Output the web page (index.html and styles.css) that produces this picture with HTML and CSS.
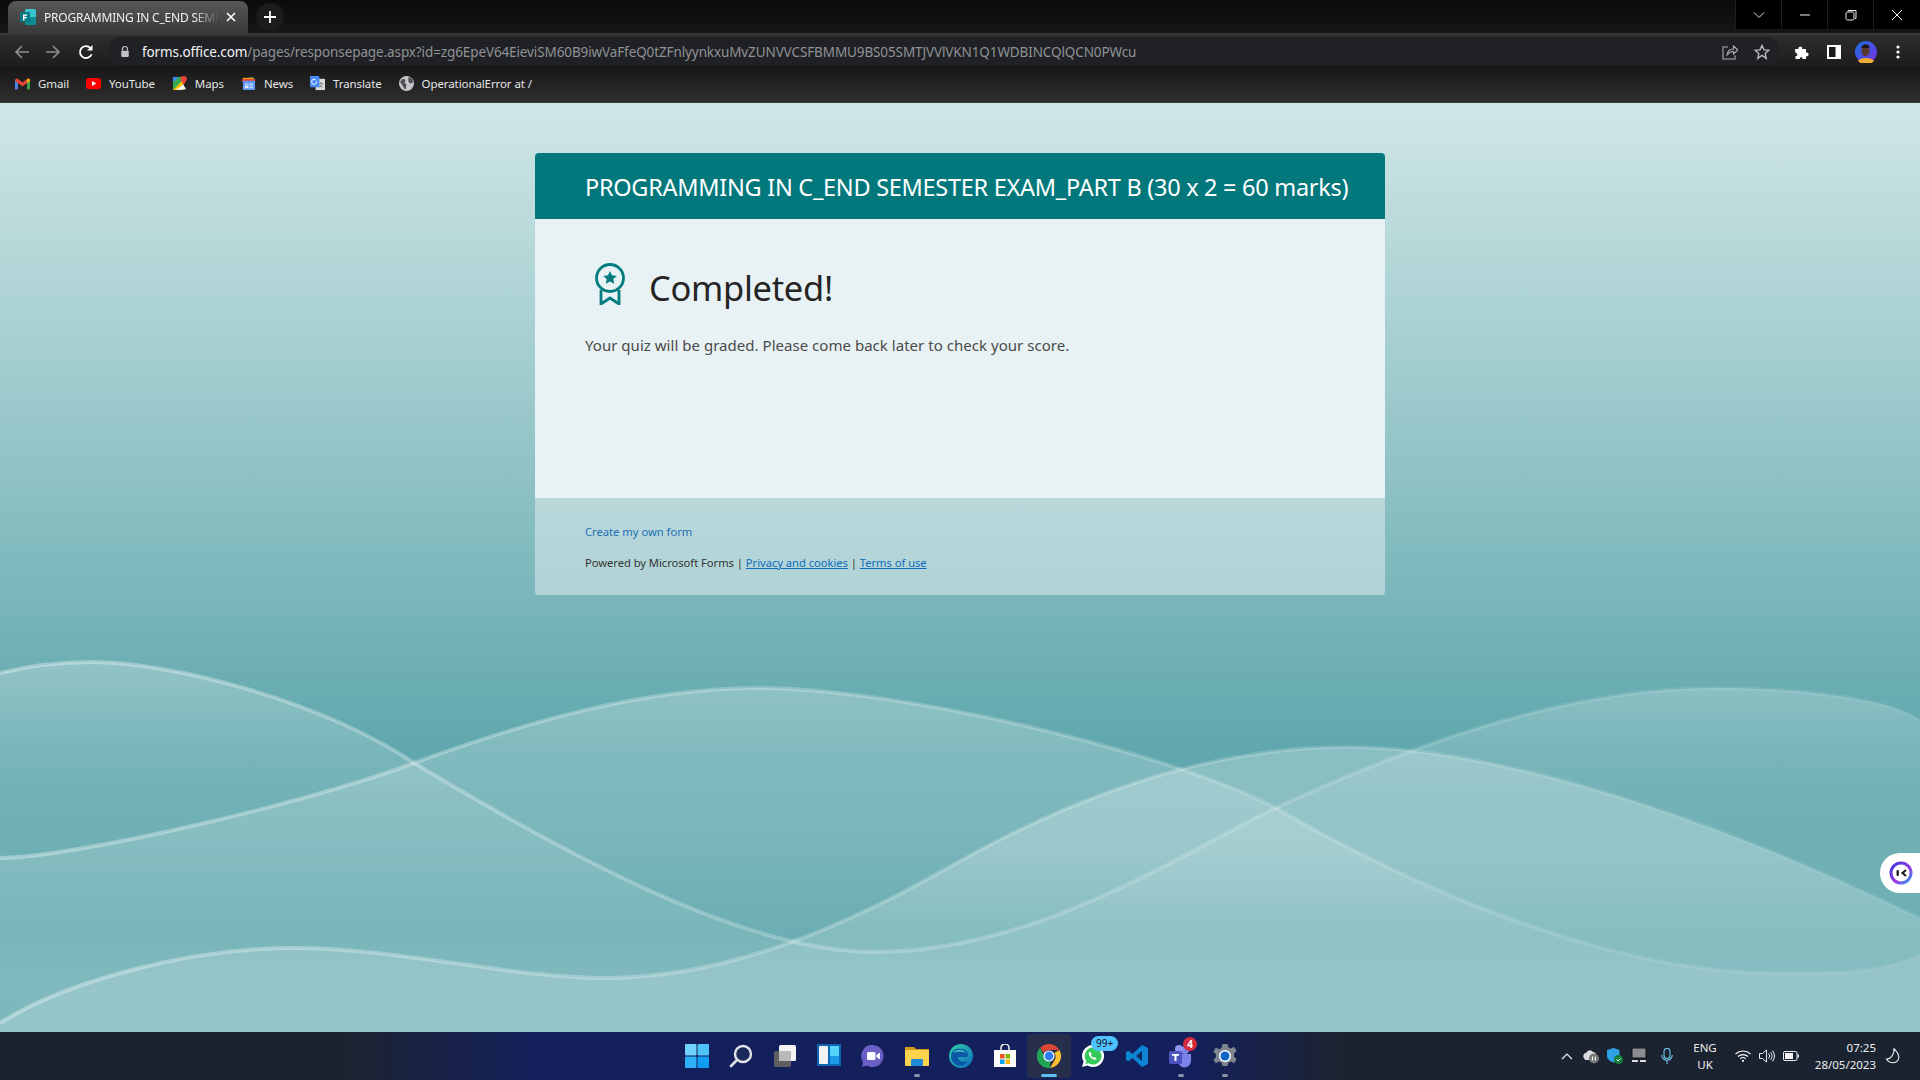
FILE: index.html
```html
<!DOCTYPE html>
<html lang="en">
<head>
<meta charset="utf-8">
<title>PROGRAMMING IN C_END SEMESTER EXAM_PART B</title>
<link rel="stylesheet" href="styles.css">
</head>
<body>
<header class="chrome">
  <div class="tabstrip">
    <div class="tab">
      <svg class="fav" viewBox="0 0 16 16"><rect x="5" y="0" width="11" height="16" rx="1.5" fill="#37c6d0"/><rect x="5" y="8" width="11" height="8" fill="#0f8a92"/><rect x="0" y="3" width="10" height="10" rx="1" fill="#057a80"/><path d="M3 5.5h4.2v1.3H4.5v1.3h2.3v1.2H4.5v2.2H3z" fill="#fff"/></svg>
      <span class="tab-title">PROGRAMMING IN C_END SEMESTER EXAM_PART B</span>
      <svg class="tab-x" viewBox="0 0 10 10"><path d="M1 1l8 8M9 1l-8 8" stroke="#fff" stroke-width="1.6"/></svg>
    </div>
    <div class="newtab"><svg viewBox="0 0 12 12"><path d="M6 0v12M0 6h12" stroke="#fff" stroke-width="1.8"/></svg></div>
    <div class="winctl">
      <div class="winbtn"><svg viewBox="0 0 12 8" width="12" height="8"><path d="M1 1.5l5 5 5-5" fill="none" stroke="#ddd" stroke-width="1"/></svg></div>
      <div class="winbtn"><svg viewBox="0 0 12 2" width="12" height="2"><path d="M1 1h10" stroke="#eee" stroke-width="1"/></svg></div>
      <div class="winbtn"><svg viewBox="0 0 12 12" width="12" height="12"><path d="M3 2.5V1.5h8v8h-1" fill="none" stroke="#eee"/><rect x="1" y="3" width="8" height="8" rx="1.5" fill="none" stroke="#eee"/></svg></div>
      <div class="winbtn"><svg viewBox="0 0 12 12" width="12" height="12"><path d="M1 1l10 10M11 1L1 11" stroke="#eee" stroke-width="1"/></svg></div>
    </div>
  </div>
  <div class="toolbar">
    <svg class="tb-ico back" viewBox="0 0 16 16"><path d="M15 8H2M8 2L2 8l6 6" fill="none" stroke="#8b8c8e" stroke-width="1.7"/></svg>
    <svg class="tb-ico fwd" viewBox="0 0 16 16"><path d="M1 8h13M8 2l6 6-6 6" fill="none" stroke="#8b8c8e" stroke-width="1.7"/></svg>
    <svg class="tb-ico reload" viewBox="0 0 16 16"><path d="M13.6 10.2A6 6 0 1 1 12.4 4" fill="none" stroke="#fff" stroke-width="1.8"/><path d="M14.5 1v5.5H9z" fill="#fff"/></svg>
    <div class="omnibox">
      <svg class="lock" viewBox="0 0 12 14"><path d="M3 6V4a3 3 0 0 1 6 0v2" fill="none" stroke="#c0c1c3" stroke-width="1.4"/><rect x="1.5" y="6" width="9" height="7.5" rx="1" fill="#c0c1c3"/></svg>
      <span class="url"><b class="host">forms.office.com</b>/pages/responsepage.aspx?id=zg6EpeV64EieviSM60B9iwVaFfeQ0tZFnlyynkxuMvZUNVVCSFBMMU9BS05SMTJVVlVKN1Q1WDBINCQlQCN0PWcu</span>
      <svg class="omni-ico" viewBox="0 0 16 16"><path d="M6 3H1v12h12v-3.5" fill="none" stroke="#aeb0b3" stroke-width="1.1"/><path d="M5 11c.5-4 3-6 6.5-6V2L16 6l-4.500 4V7.500C9 7.500 7 8.500 5 11z" fill="none" stroke="#aeb0b3" stroke-width="1.1"/></svg>
      <svg class="omni-ico star" viewBox="0 0 16 16"><path d="M8 1.500l2 4.400 4.800.5-3.600 3.200 1 4.700L8 11.400l-4.200 2.900 1-4.700L1.200 6.400 6 5.900z" fill="none" stroke="#b8babd" stroke-width="1.400"/></svg>
    </div>
    <svg class="tb-right puzzle" viewBox="0 0 16 16"><path d="M1 5h3.500c-.8-3.500 4.500-3.500 3.700 0H12v3.500c3.500-.8 3.500 4.500 0 3.700V15H8.500c.7-2.500-3-2.500-2.500 0H1.500v-3c2.500.7 2.500-3.500 0-3z" fill="#fff"/></svg>
    <svg class="tb-right panel" viewBox="0 0 14 14"><rect width="14" height="14" fill="#fff"/><rect x="2" y="2" width="6.500" height="10" fill="#1a1a1a"/></svg>
    <svg class="avatar" viewBox="0 0 22 22"><defs><linearGradient id="av" x1="0" y1="0" x2="1" y2="1"><stop offset="0" stop-color="#1670e0"/><stop offset="1" stop-color="#7a30e0"/></linearGradient></defs><circle cx="11" cy="11" r="11" fill="url(#av)"/><path d="M3 20c2-4 14-4 16 0a11 11 0 0 1-16 0z" fill="#f2ae35"/><ellipse cx="10.500" cy="9.500" rx="4" ry="5.500" fill="#5a3a30"/><path d="M6.500 7c0-5 8-5 8 0z" fill="#1d1515"/></svg>
    <svg class="kebab" viewBox="0 0 4 14"><circle cx="2" cy="2" r="1.600" fill="#fff"/><circle cx="2" cy="7" r="1.600" fill="#fff"/><circle cx="2" cy="12" r="1.600" fill="#fff"/></svg>
  </div>
  <nav class="bookmarks">
    <a class="bm"><svg viewBox="0 0 16 12"><path d="M0 12V2l2-1.500L8 5l6-4.500L16 2v10h-3V5.500L8 9 3 5.500V12z" fill="#ea4335"/><path d="M0 2v10h3V5.500L0 3z" fill="#4285f4"/><path d="M13 5.500V12h3V3z" fill="#34a853"/><path d="M14 .5L16 2v1l-3 2.500V2z" fill="#fbbc04"/></svg>Gmail</a>
    <a class="bm"><svg viewBox="0 0 16 12"><rect width="16" height="12" rx="3" fill="#f00"/><path d="M6.300 3.300L11 6l-4.700 2.700z" fill="#fff"/></svg>YouTube</a>
    <a class="bm"><svg viewBox="0 0 16 16"><path d="M1 1h11v14H1z" fill="#34a853"/><path d="M1 15L12 4v11z" fill="#fbbc04"/><path d="M1 1h6L1 7z" fill="#4285f4"/><path d="M12.500 0a3.300 3.300 0 0 1 3.300 3.300c0 2.200-3.300 5.700-3.300 5.700S9.200 5.500 9.200 3.300A3.300 3.300 0 0 1 12.500 0z" fill="#ea4335"/><path d="M4 15l11-1-3-5-8 6z" fill="#f5f5f5"/></svg>Maps</a>
    <a class="bm"><svg viewBox="0 0 16 16"><path d="M2 3l11-2 1 3z" fill="#34a853"/><path d="M2 2h11v3H2z" fill="#fbbc04"/><path d="M1 3h14v3H1z" fill="#ea4335"/><rect x="2" y="5" width="13" height="10" rx="1" fill="#5a95f5"/><path d="M4 8h4v1H4zm5 0h4v1H9zm-5 2h4v3H4zm5 0h4v1H9zm0 2h4v1H9z" fill="#e3edff"/></svg>News</a>
    <a class="bm"><svg viewBox="0 0 16 16"><rect x="6" y="3" width="10" height="12" fill="#d9dbde"/><path d="M9 8h5M11.500 6.500v1.500M13 8c-.5 2-2 3.500-3.500 4M10 9.500c.8 1.200 2 2 3.500 2.500" stroke="#777" stroke-width=".9" fill="none"/><rect width="10" height="12" rx="1" fill="#4a8af4"/><path d="M6.800 5.500v.7C6.800 8 5.700 9 4.400 9a2.700 2.700 0 0 1 0-5.500c.8 0 1.400.3 1.800.7" fill="none" stroke="#fff" stroke-width="1"/></svg>Translate</a>
    <a class="bm"><svg viewBox="0 0 16 16"><circle cx="8" cy="8" r="8" fill="#c4c6c9"/><path d="M1 6l3-3 3 1-1 3 2 2-1 5h-1L3 9zM10 1l4 2 1 4-3 1-2-2z" fill="#4f5154"/></svg>OperationalError at /</a>
  </nav>
</header>

<main class="page">
  <svg class="waves" viewBox="0 103 1920 929" preserveAspectRatio="none" aria-hidden="true">
    <defs>
      <linearGradient id="fade" gradientUnits="userSpaceOnUse" x1="0" y1="0" x2="1920" y2="0"><stop offset="0" stop-color="#fff" stop-opacity=".34"/><stop offset=".55" stop-color="#fff" stop-opacity=".2"/><stop offset="1" stop-color="#fff" stop-opacity=".06"/></linearGradient>
      <linearGradient id="g1" gradientUnits="userSpaceOnUse" x1="0" y1="662" x2="0" y2="1032"><stop offset="0" stop-color="#fff" stop-opacity=".25"/><stop offset=".39" stop-color="#fff" stop-opacity=".1"/><stop offset="1" stop-color="#fff" stop-opacity=".08"/></linearGradient>
      <linearGradient id="g2" gradientUnits="userSpaceOnUse" x1="0" y1="688" x2="0" y2="1032"><stop offset="0" stop-color="#fff" stop-opacity=".25"/><stop offset=".44" stop-color="#fff" stop-opacity=".16"/><stop offset=".71" stop-color="#fff" stop-opacity=".07"/><stop offset=".85" stop-color="#fff" stop-opacity=".13"/><stop offset="1" stop-color="#fff" stop-opacity=".1"/></linearGradient>
      <linearGradient id="g3" gradientUnits="userSpaceOnUse" x1="0" y1="747" x2="0" y2="1032"><stop offset="0" stop-color="#fff" stop-opacity=".26"/><stop offset=".39" stop-color="#fff" stop-opacity=".25"/><stop offset=".71" stop-color="#fff" stop-opacity=".16"/><stop offset="1" stop-color="#fff" stop-opacity=".2"/></linearGradient>
    </defs>
    <path fill="url(#g1)" d="M0 673C28 666 60 662 92 662C170 662 320 700 414 763C560 850 740 952 875 952C1040 952 1190 848 1276 808C1400 750 1560 688 1714 688C1780 688 1885 695 1920 720V1032H0Z"/>
    <path fill="url(#g2)" d="M0 858C70 858 300 805 414 763C520 724 640 688 759 688C900 688 1170 752 1276 808C1400 880 1600 973 1775 973C1825 973 1880 975 1920 955V1032H0Z"/>
    <path fill="url(#g3)" d="M0 1023C60 985 180 948 294 948C400 948 510 978 606 978C770 978 920 882 980 850C1070 802 1200 747 1347 747C1500 747 1720 820 1920 918V1032H0Z"/>
    <path class="wave-line" d="M0 673C28 666 60 662 92 662C170 662 320 700 414 763C560 850 740 952 875 952C1040 952 1190 848 1276 808C1400 750 1560 688 1714 688C1780 688 1885 695 1920 720"/>
    <path class="wave-line" d="M0 858C70 858 300 805 414 763C520 724 640 688 759 688C900 688 1170 752 1276 808C1400 880 1600 973 1775 973C1825 973 1880 975 1920 955"/>
    <path class="wave-line" d="M0 1023C60 985 180 948 294 948C400 948 510 978 606 978C770 978 920 882 980 850C1070 802 1200 747 1347 747C1500 747 1720 820 1920 918"/>
  </svg>

  <section class="card">
    <h1 class="card-head">PROGRAMMING IN C_END SEMESTER EXAM_PART B (30 x 2 = 60 marks)</h1>
    <div class="card-body">
      <div class="done-row">
        <svg class="ribbon" viewBox="0 0 30 42"><circle cx="15" cy="15" r="13.500" fill="none" stroke="#037c80" stroke-width="2.800"/><path d="M15 8l2 4.300 4.700.6-3.400 3.200.9 4.700L15 18.500l-4.200 2.300.9-4.700-3.400-3.200 4.700-.6z" fill="#037c80"/><path d="M6 27v14l9-6 9 6V27" fill="none" stroke="#037c80" stroke-width="2.800"/></svg>
        <h2 class="done">Completed!</h2>
      </div>
      <p class="note">Your quiz will be graded. Please come back later to check your score.</p>
    </div>
    <footer class="card-foot">
      <a class="create">Create my own form</a>
      <p class="powered">Powered by Microsoft Forms | <a class="ulink">Privacy and cookies</a> | <a class="ulink">Terms of use</a></p>
    </footer>
  </section>

  <aside class="widget">
    <svg viewBox="0 0 24 24" width="24" height="24"><defs><linearGradient id="wg" x1="0" y1="0" x2="1" y2="1"><stop offset="0" stop-color="#3a3ae0"/><stop offset=".6" stop-color="#9a3ae0"/><stop offset="1" stop-color="#2aa8f0"/></linearGradient></defs><circle cx="12" cy="12" r="10" fill="#fff" stroke="url(#wg)" stroke-width="3"/><rect x="7.500" y="9" width="2.400" height="6" rx="1" fill="#222"/><path d="M17 9l-3.500 3 3.500 3" fill="none" stroke="#222" stroke-width="2.200"/></svg>
  </aside>
</main>

<footer class="taskbar">
  <div class="task-spacer"></div>
  <div class="task-apps">
    <div class="app"><svg viewBox="0 0 24 24"><rect x="0" y="0" width="11.500" height="11.500" rx="1" fill="#6fd3fb"/><rect x="12.500" y="0" width="11.500" height="11.500" rx="1" fill="#4cc3f8"/><rect x="0" y="12.500" width="11.500" height="11.500" rx="1" fill="#2fb0f5"/><rect x="12.500" y="12.500" width="11.500" height="11.500" rx="1" fill="#109cf0"/></svg></div>
    <div class="app"><svg viewBox="0 0 24 24"><circle cx="14" cy="10" r="8" fill="#1b2a5a" stroke="#e2e4ea" stroke-width="2.400"/><path d="M8 16l-6 6" stroke="#e2e4ea" stroke-width="2.600" stroke-linecap="round"/></svg></div>
    <div class="app"><svg viewBox="0 0 24 24"><rect x="6" y="1" width="17" height="16" rx="1.500" fill="#f4f4f4"/><rect x="1" y="7" width="17" height="16" rx="1.500" fill="#5f5f5f"/><rect x="6" y="7" width="12" height="10" fill="#b9b9b9"/></svg></div>
    <div class="app"><svg viewBox="0 0 24 24"><rect width="24" height="22" fill="#0f64b4"/><rect x="2" y="2" width="9" height="18" rx="1" fill="#f2f2f2"/><rect x="13" y="2" width="9" height="10" fill="#55d3fb"/><rect x="13" y="12" width="9" height="8" fill="#1a9bea"/></svg></div>
    <div class="app"><svg viewBox="0 0 24 24"><path d="M12 1a11 11 0 1 1-6 20.500L1 23l1-5A11 11 0 0 1 12 1z" fill="#6a5fc4"/><rect x="6" y="8" width="8.500" height="8" rx="1.500" fill="#fff"/><path d="M15.500 11l3.500-2.500v7L15.500 13z" fill="#fff"/></svg></div>
    <div class="app dot"><svg viewBox="0 0 24 24"><path d="M0 3h9l2 2h13v6H0z" fill="#d39a18"/><rect y="6" width="24" height="16" rx="1" fill="#fcd34d"/><rect x="6" y="15" width="12" height="7" rx="1" fill="#1f8ad8"/></svg></div>
    <div class="app"><svg viewBox="0 0 24 24"><defs><linearGradient id="ed" x1="0" y1="0" x2="1" y2="1"><stop offset="0" stop-color="#2ed0a0"/><stop offset="1" stop-color="#0c6bc4"/></linearGradient></defs><circle cx="12" cy="12" r="12" fill="url(#ed)"/><path d="M2 12C3 5 9 4 13 5c5 1 8 5 5 8H9c0 4 5 6 10 4-3 5-9 6-13 3-3-2-4-5-4-8z" fill="#0b58a8"/><path d="M4 9c3-4 10-4 13 0-4-2-9-2-13 0z" fill="#55e0b0"/></svg></div>
    <div class="app"><svg viewBox="0 0 24 24"><path d="M8 7V4a4 4 0 0 1 8 0v3" fill="none" stroke="#e8e8e8" stroke-width="1.600"/><path d="M1 6h22v17H1z" fill="#fafafa"/><rect x="7" y="10" width="4.500" height="4.500" fill="#f25022"/><rect x="12.500" y="10" width="4.500" height="4.500" fill="#7fba00"/><rect x="7" y="15.500" width="4.500" height="4.500" fill="#00a4ef"/><rect x="12.500" y="15.500" width="4.500" height="4.500" fill="#ffb900"/></svg></div>
    <div class="app active"><svg viewBox="0 0 24 24"><path d="M12 0a12 12 0 0 1 10.400 6H12a6 6 0 0 0-5.200 3L3.200 3.800A12 12 0 0 1 12 0z" fill="#db4437"/><path d="M22.400 6A12 12 0 0 1 13 24l5.200-9A6 6 0 0 0 17.200 9z" fill="#fbc02d"/><path d="M3.200 3.800L8.400 15a6 6 0 0 0 5 2.800L13 24A12 12 0 0 1 3.200 3.800z" fill="#23a455"/><circle cx="12" cy="12" r="5.600" fill="#fff"/><circle cx="12" cy="12" r="4.400" fill="#2f7cf0"/></svg></div>
    <div class="app"><svg viewBox="0 0 24 24"><path d="M12 1a11 11 0 1 1-5.500 20.500L1 23l1.600-5.400A11 11 0 0 1 12 1z" fill="#fff"/><path d="M12 3.500a8.500 8.500 0 1 1-4.500 15.700l-3 .9.900-3A8.500 8.500 0 0 1 12 3.500z" fill="#35c95a"/><path d="M8.500 7.500c-1.500 1.500-.8 4 1.200 6s4.500 3 6 1.500l-2-2-1.200.8c-1-.5-2-1.500-2.500-2.500l.8-1.200z" fill="#fff"/></svg><span class="badge-wa">99+</span></div>
    <div class="app"><svg viewBox="0 0 24 24"><path d="M17 1l6 3v16l-6 3L7.500 14l-4 3.200L1 16V8l2.500-1.200 4 3.200z" fill="#0e84d4"/><path d="M17 7l-6 5 6 5z" fill="#0b2a5e"/></svg></div>
    <div class="app dot"><svg viewBox="0 0 24 24"><circle cx="16" cy="6" r="4" fill="#7b83eb"/><path d="M9 10h13v7a6.500 6.500 0 0 1-13 0z" fill="#7b83eb"/><circle cx="10" cy="5" r="4" fill="#8f96ef"/><rect x="0" y="7" width="13" height="13" rx="1.500" fill="#4b53bc"/><path d="M3 10h7v1.800H7.500V17h-2v-5.200H3z" fill="#fff"/></svg><span class="badge-t">4</span></div>
    <div class="app dot"><svg viewBox="0 0 24 24"><path d="M9.500 0h5l.8 3.300 2.800 1.200 3-1.800 2.500 4.300-2.500 2.200v3.600l2.500 2.200-2.500 4.300-3-1.800-2.800 1.200-.8 3.300h-5l-.8-3.300-2.800-1.200-3 1.800L.4 15.700 2.900 13.500V9.900L.4 7.700l2.500-4.300 3 1.800 2.800-1.200z" fill="#7e8791"/><circle cx="12" cy="12" r="6" fill="#fff"/><circle cx="12" cy="12" r="4.500" fill="#0f66c2"/></svg></div>
  </div>
  <div class="tray">
    <span class="tray-i"><svg viewBox="0 0 12 8" width="12" height="8"><path d="M1 7l5-5 5 5" fill="none" stroke="#eee" stroke-width="1.200"/></svg></span>
    <span class="tray-i"><svg viewBox="0 0 18 16" width="18" height="16"><path d="M2 10a3 3 0 0 1 2-5 4 4 0 0 1 7-1 3 3 0 0 1 3 3H8v5H3z" fill="#dadde2"/><circle cx="12" cy="10.500" r="5" fill="#777"/><path d="M10.500 8.500v4M13.300 8.500v4" stroke="#fff" stroke-width="1.100"/></svg></span>
    <span class="tray-i"><svg viewBox="0 0 16 16" width="16" height="16"><path d="M6.500 0l6 2v6c0 3-3 5.500-6 6.500C3 13.500 0 11 0 8V2z" fill="#2f9fe6"/><circle cx="11.500" cy="11.500" r="4.500" fill="#17803a"/><path d="M9.500 11.500l1.500 1.500 2.500-2.500" fill="none" stroke="#fff"/></svg></span>
    <span class="tray-i"><svg viewBox="0 0 16 16" width="16" height="16"><rect x="1" y="0" width="14" height="10" fill="#8b8d91" stroke="#111"/><rect x="1" y="12" width="6" height="2" fill="#ddd"/><rect x="9" y="12" width="6" height="2" fill="#ddd"/></svg></span>
    <span class="tray-i mic"><svg viewBox="0 0 12 16" width="12" height="16"><rect x="3" y="0.500" width="6" height="10" rx="3" fill="none" stroke="#6fc3e6" stroke-width="1.100"/><path d="M.7 7a5.300 5.300 0 0 0 10.600 0M6 12.500V16" fill="none" stroke="#6fc3e6" stroke-width="1.100"/></svg></span>
    <span class="lang">ENG<br>UK</span>
    <span class="tray-i"><svg viewBox="0 0 16 12" width="16" height="12"><path d="M.5 4a11 11 0 0 1 15 0M3 6.500a7.500 7.500 0 0 1 10 0M5.200 8.800a4.200 4.200 0 0 1 5.600 0" fill="none" stroke="#fff" stroke-width="1.100"/><circle cx="8" cy="10.800" r="1.100" fill="#fff"/></svg></span>
    <span class="tray-i"><svg viewBox="0 0 16 14" width="16" height="14"><path d="M.5 4.500h3L7.500 1v12l-4-3.500h-3z" fill="none" stroke="#eee"/><path d="M9.500 4.500a3.500 3.500 0 0 1 0 5M11.500 3a6 6 0 0 1 0 8M13.500 1.500a8.500 8.500 0 0 1 0 11" fill="none" stroke="#eee"/></svg></span>
    <span class="tray-i"><svg viewBox="0 0 16 10" width="16" height="10"><rect x=".5" y=".5" width="13.500" height="9" rx="1.500" fill="none" stroke="#eee"/><rect x="2" y="2" width="8" height="6" fill="#eee"/><rect x="14.500" y="3.500" width="1.500" height="3" fill="#eee"/></svg></span>
    <span class="clock">07:25<br>28/05/2023</span>
    <span class="tray-i moon"><svg viewBox="0 0 14 16" width="14" height="16"><path d="M8 .7c2 2 4.500 5 4.800 8 .2 3-2 6-5.500 6-3 0-5.500-1.500-6.800-3.800C4 11.500 8.500 7 8 .7z" fill="none" stroke="#eee" stroke-width="1.100"/></svg></span>
  </div>
</footer>
</body>
</html>
```

FILE: styles.css
```css
* { box-sizing: border-box; }
html, body { margin: 0; height: 100%; }
body {
  width: 1920px; height: 1080px; overflow: hidden;
  display: flex; flex-direction: column;
  font-family: "Noto Sans", "Open Sans", sans-serif;
}
svg { display: block; flex: none; }

/* browser chrome */
.chrome { flex: none; height: 103px; color: #fff; }
.tabstrip {
  height: 33px; display: flex; align-items: flex-end; padding-left: 8px;
  background: linear-gradient(#0b0b0b, #161616); position: relative;
}
.tab {
  width: 240px; height: 32px; display: flex; align-items: center; padding: 0 12px;
  border-radius: 8px 8px 0 0;
  background: linear-gradient(#575757, #3a3a3a);
}
.fav { width: 16px; height: 16px; margin-right: 8px; }
.tab-title {
  flex: 1; min-width: 0; overflow: hidden; white-space: nowrap;
  font-size: 12px; color: #f0f0f0; letter-spacing: -.2px;
  -webkit-mask-image: linear-gradient(90deg, #000 85%, transparent);
  mask-image: linear-gradient(90deg, #000 85%, transparent);
}
.tab-x { width: 10px; height: 10px; margin-left: 7px; }
.newtab {
  width: 28px; height: 28px; margin: 0 0 2px 8px; border-radius: 50%;
  background: #1c1c1c; display: flex; align-items: center; justify-content: center;
}
.newtab svg { width: 12px; height: 12px; }
.winctl { margin-left: auto; align-self: flex-start; height: 29px; display: flex; padding-right: 1px; background: #000; }
.winbtn {
  width: 46px; display: flex; align-items: center; justify-content: center;
  border-left: 1px solid #1e1e1e;
}
.toolbar {
  height: 33px; display: flex; align-items: flex-start; padding: 4px 0 0 14px;
  background: linear-gradient(#3c3c3c 0, #2c2c2c 4px, #1d1d1d 100%);
}
.tb-ico { width: 16px; height: 16px; margin-top: 7px; }
.fwd { margin-left: 15px; }
.reload { margin-left: 17px; }
.omnibox {
  width: 1672px; height: 29px; margin-left: 14px; padding: 0 10px 0 12px;
  display: flex; align-items: center; border-radius: 14px; background: #202124;
}
.lock { width: 10px; height: 13px; margin-right: 12px; }
.url { flex: 1; font-size: 13.5px; color: #8f9296; white-space: nowrap; overflow: hidden; letter-spacing: -.11px; }
.host { font-weight: 400; color: #f2f3f4; }
.omni-ico { width: 16px; height: 16px; margin-left: 16px; }
.tb-right { margin-top: 7px; }
.puzzle { width: 16px; height: 16px; margin-left: 14px; }
.panel { width: 14px; height: 14px; margin: 8px 0 0 17px; }
.avatar { width: 22px; height: 22px; margin: 4px 0 0 14px; }
.kebab { width: 4px; height: 14px; margin: 8px 0 0 19px; }
.bookmarks {
  height: 37px; display: flex; align-items: center; padding: 0 0 2px 15px;
  gap: 17px; background: linear-gradient(#171717, #2e2e2e);
  border-bottom: 1px solid #3a3a3a;
}
.bm { display: flex; align-items: center; gap: 8px; font-size: 11.5px; color: #e6e6e6; white-space: nowrap; letter-spacing: -.1px; }
.bm svg { width: 15px; height: 15px; }

/* page */
.page {
  flex: 1; min-height: 0; position: relative; padding-top: 50px;
  background: linear-gradient(#d0e6e6 0, #60a8ad 69%, #60a8ad 100%);
}
.waves { position: absolute; left: 0; top: 0; width: 100%; height: 100%; }
.wave-line { fill: none; stroke: url(#fade); stroke-width: 4; }
.card {
  position: relative; width: 850px; height: 442px; margin: 0 auto;
  display: flex; flex-direction: column; border-radius: 4px; overflow: hidden;
}
.card-head {
  margin: 0; height: 66px; padding: 17px 0 0 50px; background: #03787c; color: #fff;
  font-size: 23.5px; line-height: 34px; font-weight: 400; white-space: nowrap; letter-spacing: -.28px;
}
.card-body { height: 279px; padding: 43px 50px 0; background: #e8f2f4; }
.done-row { display: flex; align-items: center; gap: 24px; height: 44px; padding-left: 10px; }
.ribbon { width: 30px; height: 42px; }
.done { margin: 8px 0 0; font-size: 34.5px; line-height: 44px; font-weight: 400; color: #242424; letter-spacing: -.3px; }
.note { margin: 28px 0 0; font-size: 15px; line-height: 22px; color: #4a4a4a; letter-spacing: .03px; }
.card-foot { flex: 1; padding: 26px 50px 0; background: linear-gradient(#b9d9db, #b1d3d6); font-size: 11.2px; }
.create { display: block; line-height: 16px; color: #1f6fb8; }
.powered { margin: 15px 0 0; line-height: 16px; color: #333; letter-spacing: -.03px; }
.ulink { color: #0f6cbd; text-decoration: underline; }
.widget {
  position: absolute; right: 0; top: 750px; width: 40px; height: 40px;
  border-radius: 20px 0 0 20px; background: #fff;
  display: flex; align-items: center; padding-left: 9px;
}

/* taskbar */
.taskbar {
  flex: none; height: 48px; display: grid; grid-template-columns: 1fr auto 1fr; align-items: center;
  background: linear-gradient(90deg, #1c2330 0, #1c2330 18%, #14205c 28%, #14205c 62%, #1c2330 70%, #1c2330 100%);
}
.task-apps { display: flex; padding-left: 2px; }
.app { width: 44px; height: 44px; display: flex; align-items: center; justify-content: center; position: relative; }
.app svg { width: 24px; height: 24px; }
.active { background: #262e4c; border-radius: 4px; }
.active::after { content: ""; position: absolute; left: 14px; right: 14px; bottom: 1px; height: 3px; border-radius: 2px; background: #5cc0f5; }
.dot::after { content: ""; position: absolute; left: 19px; right: 19px; bottom: 1px; height: 3px; border-radius: 2px; background: #8a93a8; }
.badge-wa {
  position: absolute; left: 20px; top: 2px; height: 15px; padding: 0 5px; border-radius: 8px;
  background: #4cc2ff; color: #111; font-size: 10px; line-height: 15px;
}
.badge-t {
  position: absolute; left: 24px; top: 3px; width: 14px; height: 14px; border-radius: 50%;
  background: #d42b3c; color: #fff; font-size: 10px; line-height: 14px; text-align: center; font-weight: 700;
}
.tray { justify-self: end; display: flex; align-items: center; padding-right: 15px; color: #eee; font-size: 11.5px; line-height: 17px; }
.tray-i { width: 24px; height: 24px; display: flex; align-items: center; justify-content: center; }
.mic { margin-left: 4px; }
.lang { width: 40px; margin: 0 6px; text-align: center; }
.clock { width: 73px; text-align: right; white-space: nowrap; }
.moon { margin-left: 5px; }
```
